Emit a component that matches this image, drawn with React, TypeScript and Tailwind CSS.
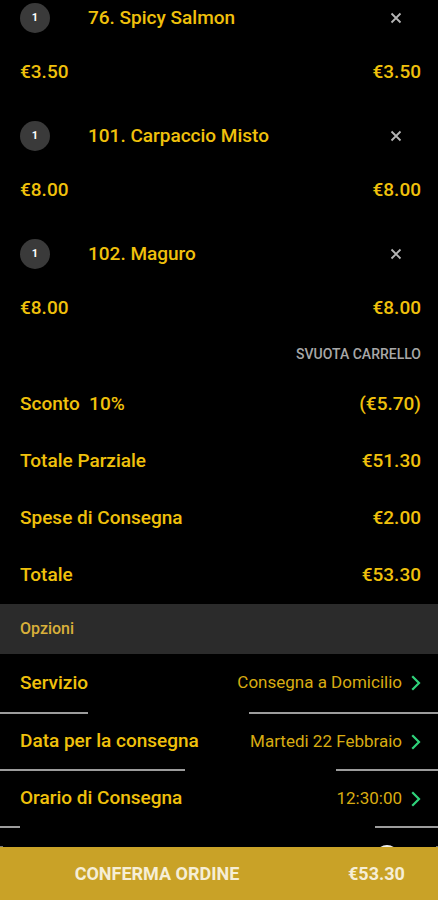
import React from "react";

const items = [
  { q: 1, name: "76. Spicy Salmon", price: "€3.50", total: "€3.50" },
  { q: 1, name: "101. Carpaccio Misto", price: "€8.00", total: "€8.00" },
  { q: 1, name: "102. Maguro", price: "€8.00", total: "€8.00" },
];

const summary = [
  { l: "Sconto\u00a0\u00a010%", r: "(€5.70)" },
  { l: "Totale Parziale", r: "€51.30" },
  { l: "Spese di Consegna", r: "€2.00" },
  { l: "Totale", r: "€53.30" },
];

const options = [
  { l: "Servizio", r: "Consegna a Domicilio", h: "h-[58px]", left: "w-[88px]", right: "w-[189px]" },
  { l: "Data per la consegna", r: "Martedi 22 Febbraio", h: "h-[55px]", left: "w-[185px]", right: "w-[102px]" },
  { l: "Orario di Consegna", r: "12:30:00", h: "h-[55px]", left: "w-[20px]", right: "w-[63px]" },
];

function Chevron() {
  return (
    <svg width="10" height="16" viewBox="0 0 10 16" className="ml-[9px] shrink-0">
      <path d="M2 2 L8 8 L2 14" fill="none" stroke="#2fd27a" strokeWidth="2.2" strokeLinecap="square" />
    </svg>
  );
}

export default function App() {
  return (
    <div
      className="w-[438px] h-[900px] bg-black overflow-hidden"
      style={{ fontFamily: "Roboto, 'Liberation Sans', sans-serif" }}
    >
      <div className="h-[847px] overflow-hidden">
        {items.map((it, i) => (
          <div key={i} className={i < items.length - 1 ? "pb-[28px]" : ""}>
            <div className="h-[36px] flex items-center pl-[20px] pr-[36px]">
              <div className="w-[30px] h-[30px] rounded-full bg-[#3a3a3a] flex items-center justify-center text-white text-[11px] font-bold">
                {it.q}
              </div>
              <div className="ml-[38px] flex-1 text-[19px] font-medium text-[#f0c10c]">{it.name}</div>
              <svg width="12" height="12" viewBox="0 0 12 12">
                <path d="M1.5 1.5 L10.5 10.5 M10.5 1.5 L1.5 10.5" stroke="#b5b5b5" strokeWidth="1.8" />
              </svg>
            </div>
            <div className="h-[36px] mt-[18px] flex items-center justify-between pr-[17px] pl-[20px] text-[19px] font-medium text-[#f0c10c]">
              <span>{it.price}</span>
              <span>{it.total}</span>
            </div>
          </div>
        ))}
        <div className="h-[50px] pt-[6px] flex items-center justify-end pr-[17px] text-[14px] font-medium text-[#a8a8a8]">
          SVUOTA CARRELLO
        </div>
        {summary.map((s, i) => (
          <div key={i} className="h-[57px] flex items-center justify-between pl-[20px] pr-[17px] text-[19px] font-medium text-[#f0c10c]">
            <span className="whitespace-pre">{s.l}</span>
            <span>{s.r}</span>
          </div>
        ))}
        <div className="h-[50px] bg-[#2b2b2b] flex items-center px-[20px] text-[16px] font-medium text-[#d9b03a]">
          Opzioni
        </div>
        {options.map((o, i) => (
          <div key={i}>
            <div className={`${o.h} flex items-center justify-between pl-[20px] pr-[17px]`}>
              <span className="text-[19px] font-medium text-[#f0c10c]">{o.l}</span>
              <span className="flex items-center text-[17px] text-[#d8ac12]">
                {o.r}
                <Chevron />
              </span>
            </div>
            <div className="h-[2px] flex justify-between">
              <div className={`${o.left} h-[2px] bg-[#9c9c9c]`} />
              <div className={`${o.right} h-[2px] bg-[#9c9c9c]`} />
            </div>
          </div>
        ))}
        <div className="h-[60px] relative">
          <div className="absolute left-[375px] top-[17px] w-[24px] h-[24px] rounded-full bg-[#eeeeee]" />
          <div className="absolute left-0 top-[18px] w-[3px] h-[4px] bg-[#777]" />
          <div className="absolute right-0 top-[18px] w-[2px] h-[4px] bg-[#777]" />
        </div>
      </div>
      <div className="h-[53px] bg-[#c9a227] flex items-center text-[#f6eed6] text-[18px] font-bold">
        <div className="w-[314px] flex justify-center">CONFERMA ORDINE</div>
        <div className="flex-1 pl-[34px]">€53.30</div>
      </div>
    </div>
  );
}
